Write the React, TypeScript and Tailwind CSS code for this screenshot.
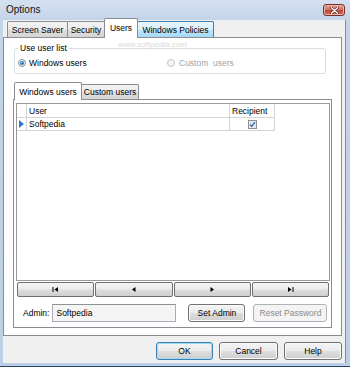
import type { ReactNode } from "react";

const btnFace =
  "bg-[linear-gradient(to_bottom,#f4f4f4_0%,#ebebeb_48%,#dddddd_52%,#cfcfcf_100%)]";

function Button({
  children,
  className = "",
  disabled = false,
  primary = false,
}: {
  children: ReactNode;
  className?: string;
  disabled?: boolean;
  primary?: boolean;
}) {
  const look = disabled
    ? "border-[#adb2b5] bg-[#f4f4f4] text-[#8a8a8a]"
    : primary
      ? `border-[#3c7fb1] ${btnFace} shadow-[inset_0_0_0_1px_#9fdcf5] text-black`
      : `border-[#707070] ${btnFace} shadow-[inset_0_0_0_1px_#fbfbfb] text-black`;
  return (
    <div
      className={`h-[18px] shrink-0 rounded-[3px] border flex items-center justify-center ${look} ${className}`}
    >
      {children}
    </div>
  );
}

function Radio({ checked, disabled }: { checked?: boolean; disabled?: boolean }) {
  return (
    <svg width="8" height="8" viewBox="0 0 8 8" className="shrink-0">
      <circle
        cx="4"
        cy="4"
        r="3.5"
        fill={disabled ? "#f4f4f4" : "#eef0f2"}
        stroke={disabled ? "#c4c6c8" : "#8e8f8f"}
        strokeWidth="1"
      />
      {checked && <circle cx="4" cy="4" r="2" fill="#2a73c9" />}
      {checked && <circle cx="3.5" cy="3.4" r="0.8" fill="#8fc6f5" />}
    </svg>
  );
}

function NavGlyph({ kind }: { kind: "first" | "prev" | "next" | "last" }) {
  return (
    <svg width="7" height="5" viewBox="0 0 7 5">
      {kind === "first" && (
        <>
          <rect x="0.5" y="0" width="1" height="5" fill="#000" />
          <polygon points="6,0 6,5 2.5,2.5" fill="#000" />
        </>
      )}
      {kind === "prev" && <polygon points="5.5,0 5.5,5 2,2.5" fill="#000" />}
      {kind === "next" && <polygon points="1.5,0 1.5,5 5,2.5" fill="#000" />}
      {kind === "last" && (
        <>
          <polygon points="1,0 1,5 4.5,2.5" fill="#000" />
          <rect x="5.5" y="0" width="1" height="5" fill="#000" />
        </>
      )}
    </svg>
  );
}

const tabIdle =
  "h-[16px] border border-b-0 border-[#898c95] rounded-t-[2px] bg-[linear-gradient(to_bottom,#f3f3f3_0%,#ebebeb_50%,#dedede_51%,#d6d6d6_100%)] flex items-center justify-center";

export default function App() {
  return (
    <div className="relative w-[350px] h-[367px] overflow-hidden flex flex-col bg-[linear-gradient(to_bottom,#d5e1f0_0px,#c4d4e9_20px,#bdcfe6_100%)] border-b border-[#27445f] font-['Liberation_Sans',Arial,sans-serif] text-[8.5px] leading-[10px] text-black">
      {/* title bar */}
      <div className="h-[20px] shrink-0 flex items-center justify-between pl-[6px] pr-[5px]">
        <span className="text-[10px] leading-[12px] text-[#141414]">Options</span>
        <div className="w-[22px] h-[12px] rounded-[3px] border border-[#7b2f28] bg-[linear-gradient(to_bottom,#e2a196_0%,#d27465_45%,#c0483a_55%,#cf6a55_100%)] shadow-[inset_0_0_0_1px_#eab3a8] flex items-center justify-center">
          <svg width="9" height="7" viewBox="0 0 9 7">
            <path d="M1.5 0.8 L7.5 6.2 M7.5 0.8 L1.5 6.2" stroke="#5a1e18" strokeWidth="2.6" strokeLinecap="round" />
            <path d="M1.5 0.8 L7.5 6.2 M7.5 0.8 L1.5 6.2" stroke="#ffffff" strokeWidth="1.4" strokeLinecap="round" />
          </svg>
        </div>
      </div>

      {/* client area */}
      <div className="flex-1 flex flex-col ml-[3px] mr-[4px] mb-[3px] bg-[#f0f0f0] border-r border-[#7d8ea4]">
        <div className="h-[17px] shrink-0 flex items-end pl-[4px]">
          <div className={`${tabIdle} w-[61px]`}>Screen Saver</div>
          <div className={`${tabIdle} w-[38px] -ml-px`}>Security</div>
          <div className="relative z-10 -mb-px -ml-px h-[20px] w-[34px] border border-b-0 border-[#898c95] rounded-t-[2px] bg-white flex items-center justify-center pb-[2px]">
            Users
          </div>
          <div className="h-[16px] w-[77px] -ml-px border border-b-0 border-[#3c7fb1] rounded-t-[2px] bg-[linear-gradient(to_bottom,#eaf6fd_0%,#d9f0fc_50%,#bee6fd_51%,#a7d9f5_100%)] flex items-center justify-center">
            Windows Policies
          </div>
        </div>

        {/* tab page */}
        <div className="h-[299px] mr-[3px] bg-white border border-[#898c95] flex flex-col">
          <fieldset className="mt-[5px] ml-[10px] w-[312px] border border-[#d5dfe5] rounded-[3px] px-[3px] pb-[5px]">
            <legend className="px-[2px] leading-[10px]">Use user list</legend>
            <div className="mt-[5px] h-[10px] flex items-center">
              <div className="w-[149px] flex items-center gap-[3px]">
                <Radio checked />
                <span>Windows users</span>
              </div>
              <div className="flex items-center gap-[4px] text-[#a3a3a3]">
                <Radio disabled />
                <span>Custom&nbsp; users</span>
              </div>
            </div>
          </fieldset>

          <div className="mt-[8px] ml-[10px] h-[17px] shrink-0 flex items-end">
            <div className="relative z-10 -mb-px h-[18px] w-[68px] border border-b-0 border-[#898c95] rounded-t-[2px] bg-white flex items-center justify-center">
              Windows users
            </div>
            <div className="h-[15px] w-[57px] border border-b-0 border-l-0 border-[#898c95] rounded-tr-[2px] bg-[linear-gradient(to_bottom,#f3f3f3_0%,#ebebeb_50%,#dedede_51%,#d6d6d6_100%)] flex items-center justify-center">
              Custom users
            </div>
          </div>

          <div className="ml-[9px] w-[319px] h-[229px] border border-[#898c95] bg-white flex flex-col pl-[2px] pr-[1px] pt-[3px]">
            {/* grid */}
            <div className="h-[178px] border border-[#9a9a9a] bg-white">
              <div className="w-fit flex h-[14px] border-b border-[#d4d4d4]">
                <div className="w-[10px] border-r border-[#d4d4d4]" />
                <div className="w-[203px] border-r border-[#d4d4d4] pl-[2px] flex items-center">User</div>
                <div className="w-[45px] border-r border-[#d4d4d4] pl-[2px] flex items-center">Recipient</div>
              </div>
              <div className="w-fit flex h-[13px] border-b border-[#d4d4d4]">
                <div className="w-[10px] border-r border-[#d4d4d4] flex items-center pl-[2px]">
                  <svg width="5" height="8" viewBox="0 0 5 8">
                    <polygon points="0,0 5,4 0,8" fill="#2a7ad6" />
                  </svg>
                </div>
                <div className="w-[203px] border-r border-[#d4d4d4] pl-[2px] flex items-center">Softpedia</div>
                <div className="w-[45px] border-r border-[#d4d4d4] flex items-center justify-center">
                  <svg width="9" height="9" viewBox="0 0 9 9">
                    <rect x="0.5" y="0.5" width="8" height="8" fill="#e9eef4" stroke="#8f8f8f" />
                    <rect x="1.5" y="1.5" width="6" height="6" fill="#dde6f0" />
                    <path d="M2 4.6 L3.7 6.3 L7 2.2" stroke="#3a5aa8" strokeWidth="1.3" fill="none" />
                  </svg>
                </div>
              </div>
            </div>

            {/* navigation */}
            <div className="mt-[1px] h-[15px] shrink-0 grid grid-cols-4 gap-[1px] px-[1px]">
              {(["first", "prev", "next", "last"] as const).map((k) => (
                <div
                  key={k}
                  className={`rounded-[2px] border border-[#707070] ${btnFace} flex items-center justify-center`}
                >
                  <NavGlyph kind={k} />
                </div>
              ))}
            </div>

            {/* admin */}
            <div className="mt-[7px] flex items-center pl-[7px]">
              <span>Admin:</span>
              <div className="ml-[3px] w-[124px] h-[18px] border border-[#abadb3] border-t-[#8e9297] bg-[#f5f5f5] flex items-center pl-[3px]">
                Softpedia
              </div>
              <Button className="ml-[12px] w-[57px]">Set Admin</Button>
              <Button className="ml-[8px] w-[74px]" disabled>
                Reset Password
              </Button>
            </div>
          </div>
        </div>

        {/* dialog buttons */}
        <div className="mt-[6px] flex justify-end gap-[6px] pr-[3px]">
          <Button primary className="w-[57px]">OK</Button>
          <Button className="w-[59px]">Cancel</Button>
          <Button className="w-[58px]">Help</Button>
        </div>
      </div>

      {/* watermark */}
      <div className="absolute left-[118px] top-[41px] text-[8px] leading-[8px] text-[#dadada] pointer-events-none">
        www.softpedia.com
      </div>
    </div>
  );
}
